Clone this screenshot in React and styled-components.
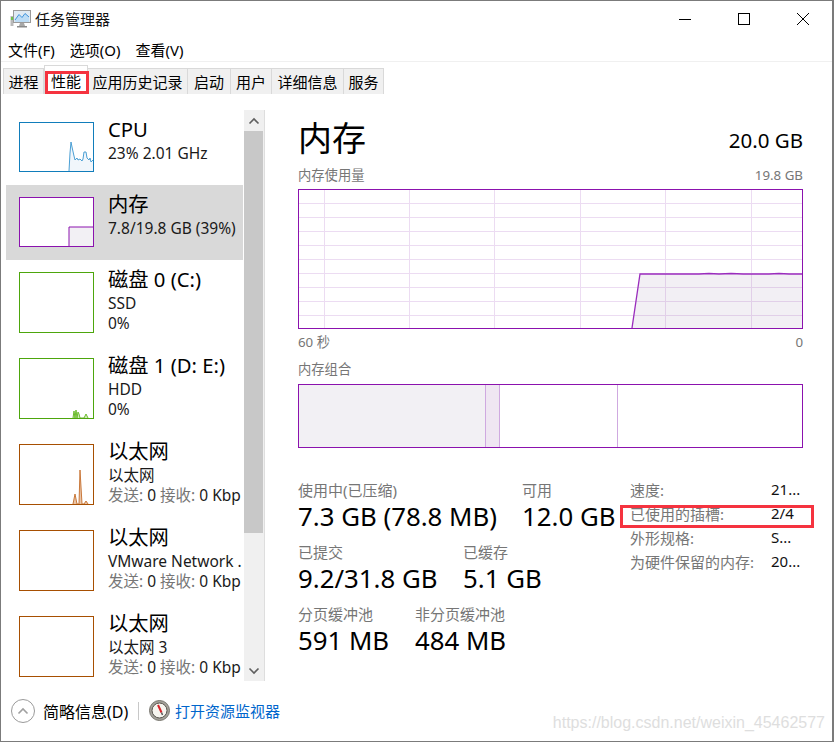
import styled, { createGlobalStyle } from "styled-components";

const Global = createGlobalStyle`
	html, body {
		margin: 0;
		padding: 0;
		background: #fff;
	}
	* {
		box-sizing: border-box;
	}
`;

const Window = styled.div`
	position: relative;
	width: 834px;
	height: 742px;
	display: flex;
	flex-direction: column;
	overflow: hidden;
	background: #fff;
	border: 1px solid #7b7b7b;
	border-right-width: 2px;
	color: #000;
	font-family: "Noto Sans", "Noto Sans CJK SC", sans-serif;
`;

const TitleBar = styled.div`
	height: 37px;
	display: flex;
	align-items: center;
	padding: 0 0 2px 9px;
	flex-shrink: 0;
`;

const AppTitle = styled.span`
	margin-left: 4px;
	font-size: 15px;
	color: #111;
`;

const WinButtons = styled.div`
	margin-left: auto;
	display: flex;
	align-items: center;
	margin-right: 22px;
	gap: 45px;
`;

const MenuBar = styled.div`
	height: 24px;
	display: flex;
	align-items: center;
	padding-left: 7px;
	gap: 15px;
	font-size: 15px;
	border-bottom: 1px solid #f0f0f0;
	flex-shrink: 0;
`;

const Tabs = styled.div`
	height: 32px;
	display: flex;
	align-items: flex-end;
	padding-left: 2px;
	flex-shrink: 0;
`;

const Tab = styled.div`
	height: ${(p) => (p.$active ? "29px" : "26px")};
	width: ${(p) => p.$w}px;
	display: flex;
	align-items: center;
	justify-content: center;
	font-size: 15px;
	background: ${(p) => (p.$active ? "#fff" : "#f0f0f0")};
	border: 1px solid #d9d9d9;
	border-left-width: ${(p) => (p.$first || p.$active ? 1 : 0)}px;
	border-bottom: 0;
`;

const Body = styled.div`
	flex: 1;
	display: flex;
	min-height: 0;
	padding-top: 16px;
`;

const Sidebar = styled.div`
	width: 238px;
	margin-left: 5px;
	padding-right: 1px;
	flex-shrink: 0;
`;

const Item = styled.div`
	height: ${(p) => (p.$tall ? 86 : 75)}px;
	display: flex;
	align-items: flex-start;
	padding: 12px 0 0 13px;
	overflow: hidden;
	background: ${(p) => (p.$selected ? "#d9d9d9" : "transparent")};
`;

const Thumb = styled.div`
	width: 75px;
	height: ${(p) => (p.$tall ? 61 : 50)}px;
	flex-shrink: 0;
	border: 1px solid ${(p) => p.$color};
	background: #fff;

	svg {
		display: block;
		width: 100%;
		height: 100%;
	}
`;

const ItemText = styled.div`
	margin: -5px 0 0 14px;
	white-space: nowrap;
`;

const ItemTitle = styled.div`
	font-size: 20.3px;
	line-height: 25px;
	margin-bottom: 1px;
`;

const ItemSub = styled.div`
	font-size: 15.5px;
	line-height: 20px;
	color: #1a1a1a;
`;

const Dim = styled.span`
	color: #767676;
`;

const Scrollbar = styled.div`
	width: 21px;
	height: 571px;
	display: flex;
	flex-direction: column;
	flex-shrink: 0;
	background: #f0f0f0;
	border-right: 1px solid #dedede;
`;

const ScrollBtn = styled.div`
	height: 21px;
	display: flex;
	align-items: center;
	justify-content: center;
	flex-shrink: 0;
`;

const ScrollThumb = styled.div`
	height: 402px;
	background: #c8c8c8;
	border-right: 1px solid #f0f0f0;
	flex-shrink: 0;
`;

const ScrollRest = styled.div`
	flex: 1;
`;

const Main = styled.div`
	width: 505px;
	margin-left: 33px;
	flex-shrink: 0;
`;

const MainHead = styled.div`
	height: 42px;
	margin-top: 7px;
	display: flex;
	justify-content: space-between;
	align-items: center;
`;

const MainTitle = styled.div`
	font-size: 34px;
	line-height: 42px;
`;

const Capacity = styled.div`
	font-size: 20.5px;
	line-height: 26px;
	margin-top: 4px;
`;

const LabelRow = styled.div`
	display: flex;
	justify-content: space-between;
	font-size: 13.3px;
	line-height: 16px;
	color: #767676;
	margin-top: ${(p) => p.$top}px;
`;

const Chart = styled.div`
	height: 140px;
	margin-top: 6px;
	border: 1px solid #8b12ae;

	svg {
		display: block;
		width: 100%;
		height: 100%;
	}
`;

const Composition = styled.div`
	height: 64px;
	margin-top: 7px;
	display: flex;
	border: 1px solid #8b12ae;
`;

const Segment = styled.div`
	width: ${(p) => p.$w}px;
	flex: ${(p) => (p.$w ? "none" : 1)};
	background: ${(p) => p.$bg};
	border-right: ${(p) => (p.$last ? 0 : 1)}px solid #cfa9e0;
`;

const Stats = styled.div`
	display: flex;
	margin-top: 33px;
`;

const StatsLeft = styled.div`
	width: 332px;
	flex-shrink: 0;
`;

const StatRow = styled.div`
	display: flex;
	height: 62px;
`;

const Stat = styled.div`
	width: ${(p) => p.$w}px;
	flex-shrink: 0;
	white-space: nowrap;
`;

const StatLabel = styled.div`
	font-size: 15px;
	line-height: 18px;
	color: #767676;
`;

const StatValue = styled.div`
	font-size: 25.8px;
	line-height: 34px;
`;

const Specs = styled.div`
	display: grid;
	grid-template-columns: 141px 1fr;
	grid-auto-rows: 24px;
	align-items: center;
	font-size: 15px;
	margin-top: -4px;
`;

const SpecName = styled.div`
	color: #767676;
	white-space: nowrap;
`;

const SpecValue = styled.div`
	color: #111;
`;

const Footer = styled.div`
	height: 51px;
	display: flex;
	align-items: center;
	padding: 0 0 10px 10px;
	flex-shrink: 0;
`;

const Collapse = styled.div`
	width: 24px;
	height: 24px;
	border-radius: 50%;
	border: 1px solid #9a9a9a;
	display: flex;
	align-items: center;
	justify-content: center;
`;

const FooterText = styled.span`
	margin-left: 8px;
	font-size: 16px;
	width: 85px;
	white-space: nowrap;
`;

const FooterDivider = styled.div`
	width: 1px;
	height: 18px;
	margin: 0 10px;
	background: #c8c8c8;
`;

const MonitorLink = styled.span`
	margin-left: 5px;
	font-size: 15px;
	color: #0066cc;
`;

const RedBox = styled.div`
	position: absolute;
	left: ${(p) => p.$x}px;
	top: ${(p) => p.$y}px;
	width: ${(p) => p.$w}px;
	height: ${(p) => p.$h}px;
	border: 3px solid #f5333f;
`;

const Watermark = styled.div`
	position: absolute;
	right: 7px;
	top: 709px;
	font-family: "Liberation Sans", sans-serif;
	font-size: 16px;
	line-height: 26px;
	color: #dedede;
	white-space: nowrap;
`;

const Spark = ({ color, fill, points, w = 73, h = 48 }) => {
	const first = points[0];
	const last = points[points.length - 1];
	const shape = points.map((p) => p.join(",")).join(" ");
	return (
		<svg viewBox={`0 0 ${w} ${h}`}>
			<polygon points={`${first[0]},${h} ${shape} ${last[0]},${h}`} fill={fill} />
			<polyline points={shape} fill="none" stroke={color} strokeWidth="1" />
		</svg>
	);
};

const cpu = [
	[49, 48], [50, 30], [51, 19], [52, 24], [54, 33], [55, 37], [57, 35], [58, 37], [60, 36],
	[62, 38], [63, 36], [64, 29], [66, 29], [67, 35], [69, 37], [70, 35], [71, 39], [73, 37],
];
const disk = [
	[53, 59], [54, 52], [55, 59], [56, 51], [57, 59], [58, 53], [59, 55], [60, 59], [62, 59], [64, 59], [66, 55], [68, 59],
];
const net = [
	[53, 59], [55, 49], [57, 59], [59, 59], [60, 25], [62, 59], [64, 59], [66, 56], [68, 59],
];
const rows = [13, 27, 41, 55, 69, 83, 97, 111, 125];
const cols = [25, 110, 195, 281, 366, 452];

const TaskIcon = () => (
	<svg width="21" height="18" viewBox="0 0 21 18">
		<rect x="0.5" y="6" width="3" height="10" fill="#b9b9b9" />
		<rect x="1" y="7" width="2" height="3" fill="#6fc24a" />
		<rect x="3.5" y="0.5" width="17" height="12" fill="#dfeaf3" stroke="#9a9a9a" />
		<path d="M5 10L9 4.5L12 7.5L15 3.5L19 7V12H5Z" fill="#bcdcf5" />
		<path d="M5 10L9 4.5L12 7.5L15 3.5L19 7" fill="none" stroke="#3d93dc" />
		<path d="M10 13H14L15 16H9Z" fill="#a8a8a8" />
		<rect x="7" y="16" width="10" height="1.5" fill="#8a8a8a" />
	</svg>
);

const GaugeIcon = () => (
	<svg width="21" height="21" viewBox="0 0 21 21">
		<circle cx="10.5" cy="10.5" r="10" fill="#a5a39b" stroke="#77756e" />
		<circle cx="10.5" cy="10.5" r="7.5" fill="#f6f5ef" stroke="#55524c" />
		<path d="M9 5L12.5 12.5" stroke="#d8232a" strokeWidth="2" />
		<path d="M12.5 12.5L13.5 15" stroke="#555" strokeWidth="1.5" />
	</svg>
);

const Chevron = ({ up, color = "#5f5f5f", w = 12 }) => (
	<svg width={w} height="8" viewBox="0 0 12 8">
		<path d={up ? "M1.5 6.5L6 2L10.5 6.5" : "M1.5 1.5L6 6L10.5 1.5"} fill="none" stroke={color} strokeWidth="1.6" />
	</svg>
);

const Ether = ({ sub, thumb }) => (
	<Item $tall>
		<Thumb $tall $color="#a74f01">{thumb}</Thumb>
		<ItemText>
			<ItemTitle>以太网</ItemTitle>
			<ItemSub>{sub}</ItemSub>
			<ItemSub>
				<Dim>发送:</Dim> 0 <Dim>接收:</Dim> 0 Kbp
			</ItemSub>
		</ItemText>
	</Item>
);

export default function App() {
	return (
		<Window>
			<Global />
			<TitleBar>
				<TaskIcon />
				<AppTitle>任务管理器</AppTitle>
				<WinButtons>
					<svg width="14" height="14" viewBox="0 0 14 14">
						<path d="M1 7.5H13" stroke="#000" />
					</svg>
					<svg width="14" height="14" viewBox="0 0 14 14">
						<rect x="1.5" y="1.5" width="11" height="11" fill="none" stroke="#000" />
					</svg>
					<svg width="14" height="14" viewBox="0 0 14 14">
						<path d="M1 1L13 13M13 1L1 13" stroke="#000" />
					</svg>
				</WinButtons>
			</TitleBar>
			<MenuBar>
				<span>文件(F)</span>
				<span>选项(O)</span>
				<span>查看(V)</span>
			</MenuBar>
			<Tabs>
				<Tab $first $w={41}>进程</Tab>
				<Tab $active $w={44}>性能</Tab>
				<Tab $w={100}>应用历史记录</Tab>
				<Tab $w={43}>启动</Tab>
				<Tab $w={41}>用户</Tab>
				<Tab $w={72}>详细信息</Tab>
				<Tab $w={40}>服务</Tab>
			</Tabs>
			<Body>
				<Sidebar>
					<Item>
						<Thumb $color="#117dbb">
							<Spark color="#4a9fd4" fill="#f1f6fb" points={cpu} />
						</Thumb>
						<ItemText>
							<ItemTitle>CPU</ItemTitle>
							<ItemSub>23% 2.01 GHz</ItemSub>
						</ItemText>
					</Item>
					<Item $selected>
						<Thumb $color="#8b12ae">
							<Spark color="#8b12ae" fill="#f2f0f4" points={[[49, 48], [49, 29], [73, 29]]} />
						</Thumb>
						<ItemText>
							<ItemTitle>内存</ItemTitle>
							<ItemSub>7.8/19.8 GB (39%)</ItemSub>
						</ItemText>
					</Item>
					<Item $tall>
						<Thumb $tall $color="#4da60c" />
						<ItemText>
							<ItemTitle>磁盘 0 (C:)</ItemTitle>
							<ItemSub>SSD</ItemSub>
							<ItemSub>0%</ItemSub>
						</ItemText>
					</Item>
					<Item $tall>
						<Thumb $tall $color="#4da60c">
							<Spark color="#6cbb2e" fill="#d3ecc0" points={disk} h={59} />
						</Thumb>
						<ItemText>
							<ItemTitle>磁盘 1 (D: E:)</ItemTitle>
							<ItemSub>HDD</ItemSub>
							<ItemSub>0%</ItemSub>
						</ItemText>
					</Item>
					<Ether sub="以太网" thumb={<Spark color="#c9783a" fill="#e9c5a8" points={net} h={59} />} />
					<Ether sub="VMware Network ." />
					<Ether sub="以太网 3" />
				</Sidebar>
				<Scrollbar>
					<ScrollBtn>
						<Chevron up />
					</ScrollBtn>
					<ScrollThumb />
					<ScrollRest />
					<ScrollBtn>
						<Chevron />
					</ScrollBtn>
				</Scrollbar>
				<Main>
					<MainHead>
						<MainTitle>内存</MainTitle>
						<Capacity>20.0 GB</Capacity>
					</MainHead>
					<LabelRow $top={8}>
						<span>内存使用量</span>
						<span>19.8 GB</span>
					</LabelRow>
					<Chart>
						<svg viewBox="0 0 503 138" preserveAspectRatio="none">
							{rows.map((y) => (
								<path key={y} d={`M0 ${y + 0.5}H503`} stroke="#ecdcf2" />
							))}
							{cols.map((x) => (
								<path key={x} d={`M${x + 0.5} 0V138`} stroke="#ecdcf2" />
							))}
							<polygon points="333,138 341,84 503,84 503,138" fill="#8b6f99" fillOpacity="0.11" />
							<polyline
								points="333,138 341,84 400,84 410,83.5 420,84 432,83.5 444,84 470,84 480,83.5 490,84 503,84"
								fill="none"
								stroke="#9a2dbd"
								strokeWidth="1.3"
							/>
						</svg>
					</Chart>
					<LabelRow $top={5}>
						<span>60 秒</span>
						<span>0</span>
					</LabelRow>
					<LabelRow $top={11}>
						<span>内存组合</span>
					</LabelRow>
					<Composition>
						<Segment $w={187} $bg="#f2f0f4" />
						<Segment $w={14} $bg="#efe6f2" />
						<Segment $w={118} $bg="#fff" />
						<Segment $last $bg="#fff" />
					</Composition>
					<Stats>
						<StatsLeft>
							<StatRow>
								<Stat $w={224}>
									<StatLabel>使用中(已压缩)</StatLabel>
									<StatValue>7.3 GB (78.8 MB)</StatValue>
								</Stat>
								<Stat $w={100}>
									<StatLabel>可用</StatLabel>
									<StatValue>12.0 GB</StatValue>
								</Stat>
							</StatRow>
							<StatRow>
								<Stat $w={165}>
									<StatLabel>已提交</StatLabel>
									<StatValue>9.2/31.8 GB</StatValue>
								</Stat>
								<Stat $w={100}>
									<StatLabel>已缓存</StatLabel>
									<StatValue>5.1 GB</StatValue>
								</Stat>
							</StatRow>
							<StatRow>
								<Stat $w={117}>
									<StatLabel>分页缓冲池</StatLabel>
									<StatValue>591 MB</StatValue>
								</Stat>
								<Stat $w={100}>
									<StatLabel>非分页缓冲池</StatLabel>
									<StatValue>484 MB</StatValue>
								</Stat>
							</StatRow>
						</StatsLeft>
						<Specs>
							<SpecName>速度:</SpecName>
							<SpecValue>21...</SpecValue>
							<SpecName>已使用的插槽:</SpecName>
							<SpecValue>2/4</SpecValue>
							<SpecName>外形规格:</SpecName>
							<SpecValue>S...</SpecValue>
							<SpecName>为硬件保留的内存:</SpecName>
							<SpecValue>20...</SpecValue>
						</Specs>
					</Stats>
				</Main>
			</Body>
			<Footer>
				<Collapse>
					<Chevron up color="#a0a0a0" />
				</Collapse>
				<FooterText>简略信息(D)</FooterText>
				<FooterDivider />
				<GaugeIcon />
				<MonitorLink>打开资源监视器</MonitorLink>
			</Footer>
			<RedBox $x={44} $y={70} $w={44} $h={23} />
			<RedBox $x={619} $y={504} $w={194} $h={23} />
			<Watermark>https://blog.csdn.net/weixin_45462577</Watermark>
		</Window>
	);
}
